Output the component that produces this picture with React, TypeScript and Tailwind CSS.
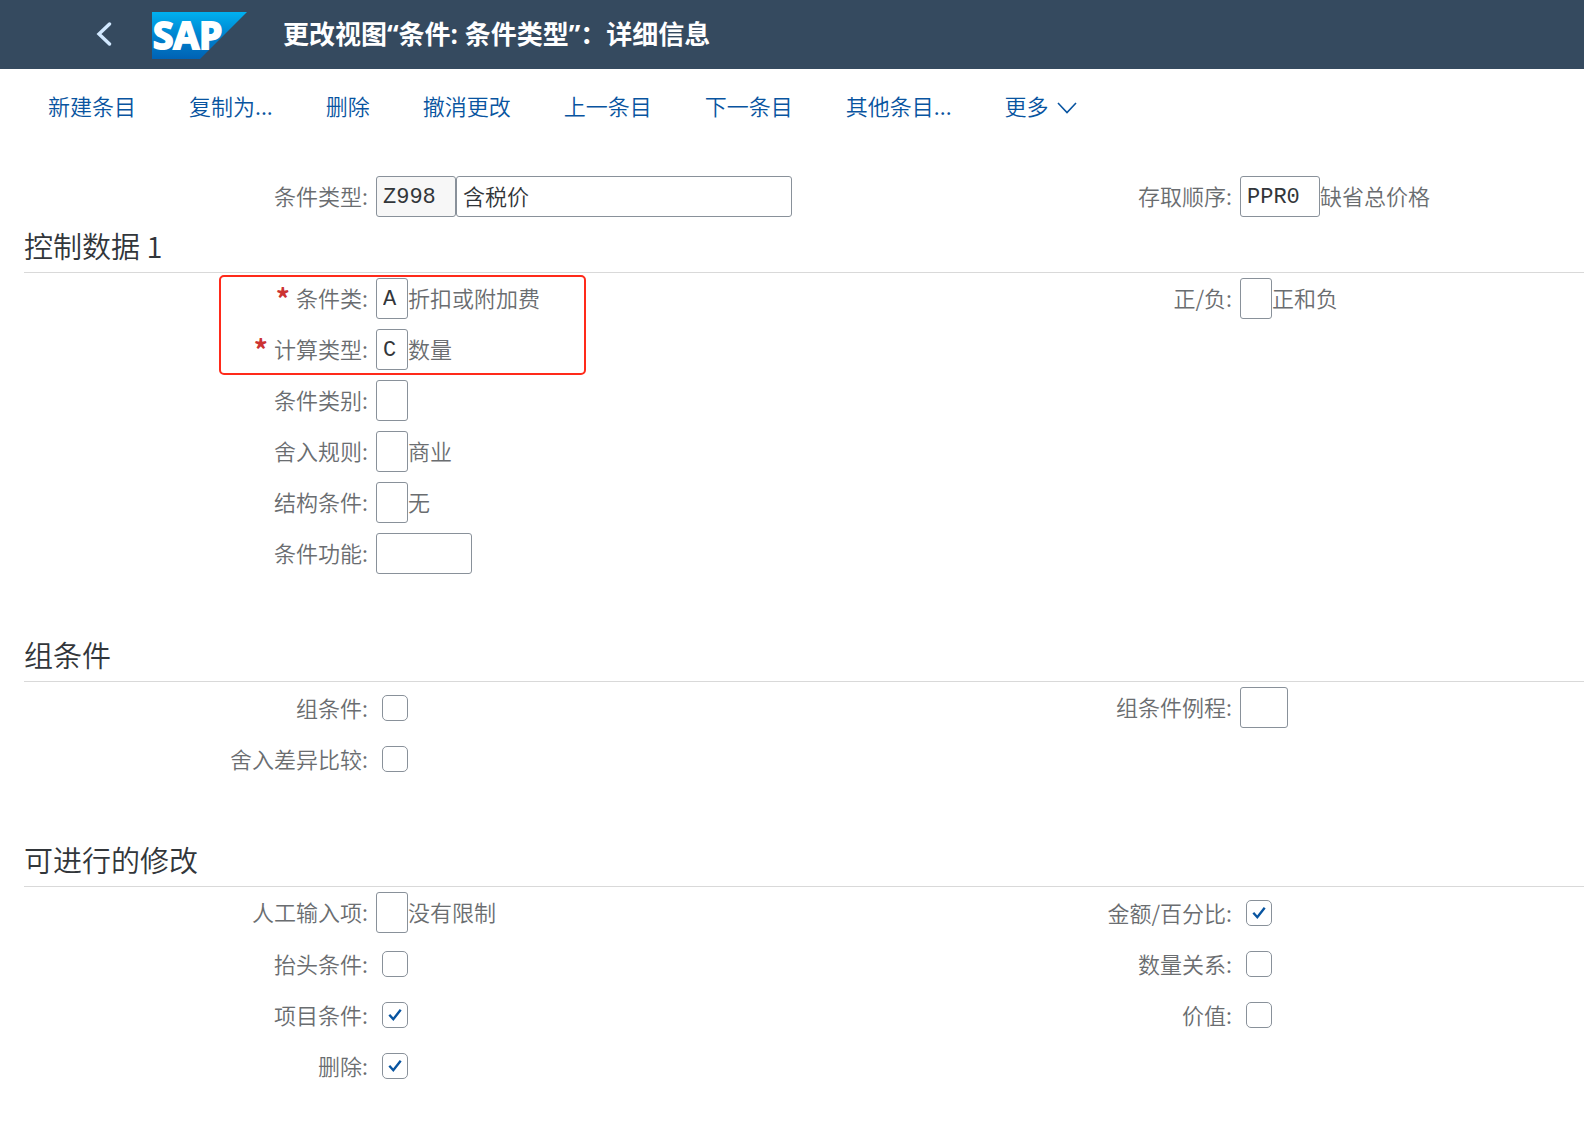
import { useState, type ReactNode } from 'react';

function BackIcon() {
  return (
    <svg className="h-6 w-4" viewBox="0 0 16 24" fill="none" stroke="#d1e8ff" strokeWidth="3.4" strokeLinecap="round">
      <path d="M13.5 2 L3 12 L13.5 22" />
    </svg>
  );
}

function SapLogo() {
  return (
    <svg className="h-[47px] w-[95px] shrink-0 overflow-visible" viewBox="0 0 95 47" role="img" aria-label="SAP">
      <defs>
        <linearGradient id="sap-blue" x1="0" y1="0" x2="0" y2="1">
          <stop offset="0" stopColor="#00b1f0" />
          <stop offset="0.5" stopColor="#0083cf" />
          <stop offset="1" stopColor="#0062b4" />
        </linearGradient>
      </defs>
      <path d="M0 0 H95 L48 47 H0 Z" fill="url(#sap-blue)" />
      <text
        x="1"
        y="37"
        fill="#fff"
        stroke="#fff"
        strokeWidth="2"
        fontFamily="'Open Sans', sans-serif"
        fontWeight="700"
        fontSize="37"
      >
        SAP
      </text>
    </svg>
  );
}

function ToolbarButton({ children }: { children: ReactNode }) {
  return (
    <button type="button" className="flex items-center whitespace-nowrap text-[22px] leading-8 text-[#0854a0]">
      {children}
    </button>
  );
}

type LabelProps = { id: string; text: string; required?: boolean; raised?: boolean };

function Label({ id, text, required, raised }: LabelProps) {
  return (
    <label
      htmlFor={id}
      className={`flex h-[41px] items-center justify-end whitespace-nowrap pr-2 text-[#6a6d70] ${raised ? 'pb-0.5' : ''}`}
    >
      {required && <span className="mr-1.5 text-[28px] font-bold leading-8 text-[#cc3333]">*</span>}
      {text}:
    </label>
  );
}

type FieldProps = {
  id: string;
  text: string;
  width: string;
  required?: boolean;
  value?: string;
  note?: string;
  readOnly?: boolean;
  right?: boolean;
  children?: ReactNode;
};

function Field({ id, text, required, width, value = '', note, readOnly, right, children }: FieldProps) {
  return (
    <>
      <div className={right ? 'col-start-3' : 'col-start-1'}>
        <Label id={id} text={text} required={required} raised />
      </div>
      <div className="flex h-[41px] items-center whitespace-nowrap text-[#6a6d70]">
        <input
          id={id}
          defaultValue={value}
          readOnly={readOnly}
          className={`h-[41px] shrink-0 rounded-[3px] border border-[#89919a] px-1.5 pt-0.5 font-['Liberation_Mono','Noto_Sans_CJK_SC',monospace] text-[22px] text-[#32363a] outline-none ${width} ${readOnly ? 'bg-[#f7f7f7]' : 'bg-white'}`}
        />
        {children}
        {note && <span className="pb-0.5">{note}</span>}
      </div>
    </>
  );
}

type CheckFieldProps = { id: string; text: string; checked?: boolean; right?: boolean };

function CheckField({ id, text, checked = false, right }: CheckFieldProps) {
  const [on, setOn] = useState(checked);
  return (
    <>
      <div className={right ? 'col-start-3' : 'col-start-1'}>
        <Label id={id} text={text} />
      </div>
      <div className="flex h-[41px] items-center pl-1.5">
        <span className="grid">
          <input
            id={id}
            type="checkbox"
            checked={on}
            onChange={() => setOn(!on)}
            className="col-start-1 row-start-1 size-[26px] appearance-none rounded-[5px] border border-[#89919a] bg-white"
          />
          {on && (
            <svg
              className="pointer-events-none col-start-1 row-start-1 size-[26px]"
              viewBox="0 0 26 26"
              fill="none"
              stroke="#0854a0"
              strokeWidth="2.4"
            >
              <path d="M7.3 12.8 L11.3 17.2 L18.7 7.8" />
            </svg>
          )}
        </span>
      </div>
    </>
  );
}

function Rows({ children }: { children: ReactNode }) {
  return <div className="grid grid-cols-[44fr_64fr_44fr_43fr] gap-y-2.5">{children}</div>;
}

function Section({ title, children }: { title: string; children: ReactNode }) {
  return (
    <section>
      <h2 className="flex h-[52px] items-center border-b border-[#d9d9d9] pb-1 text-[29px] font-[350] leading-10 text-[#32363a]">
        {title}
      </h2>
      <div className="relative pt-[5px]">{children}</div>
    </section>
  );
}

export default function App() {
  return (
    <div className="min-h-screen bg-white font-['Noto_Sans_CJK_SC',sans-serif] text-[22px] font-[350]">
      <header className="flex h-[69px] items-center bg-[#354a5f] pl-24 pt-0.5">
        <button type="button" aria-label="返回" className="mr-10 pb-1">
          <BackIcon />
        </button>
        <SapLogo />
        <h1 className="ml-9 whitespace-nowrap pb-1 font-['Open_Sans','Noto_Sans_CJK_SC',sans-serif] text-[26px] font-bold leading-10 text-white">
          更改视图“条件: 条件类型”：详细信息
        </h1>
      </header>

      <nav className="flex h-[75px] items-center gap-[53px] pb-1 pl-12">
        <ToolbarButton>新建条目</ToolbarButton>
        <ToolbarButton>复制为...</ToolbarButton>
        <ToolbarButton>删除</ToolbarButton>
        <ToolbarButton>撤消更改</ToolbarButton>
        <ToolbarButton>上一条目</ToolbarButton>
        <ToolbarButton>下一条目</ToolbarButton>
        <ToolbarButton>其他条目...</ToolbarButton>
        <ToolbarButton>
          更多
          <svg className="ml-2 mt-1.5 h-3 w-5" viewBox="0 0 20 12" fill="none" stroke="#0854a0" strokeWidth="1.6">
            <path d="M1 1 L10 10.5 L19 1" />
          </svg>
        </ToolbarButton>
      </nav>

      <main className="flex flex-col gap-14 overflow-hidden pb-8 pl-6 pt-8">
        <div className="flex flex-col gap-1">
          <Rows>
            <Field id="type" text="条件类型" width="w-20" value="Z998" readOnly>
              <input
                aria-label="条件类型名称"
                defaultValue="含税价"
                className="h-[41px] w-[336px] rounded-[3px] border border-[#89919a] bg-white px-1.5 pb-1 text-[22px] text-[#32363a] outline-none"
              />
            </Field>
            <Field id="access" text="存取顺序" width="w-20" value="PPR0" note="缺省总价格" right />
          </Rows>
          <Section title="控制数据 1">
            <Rows>
              <Field id="class" text="条件类" width="w-8" value="A" note="折扣或附加费" required />
              <Field id="sign" text="正/负" width="w-8" note="正和负" right />
              <Field id="calc" text="计算类型" width="w-8" value="C" note="数量" required />
              <Field id="category" text="条件类别" width="w-8" />
              <Field id="rounding" text="舍入规则" width="w-8" note="商业" />
              <Field id="structure" text="结构条件" width="w-8" note="无" />
              <Field id="function" text="条件功能" width="w-24" />
            </Rows>
            <div className="pointer-events-none absolute left-[195px] top-0.5 h-[100px] w-[367px] rounded-[5px] border-2 border-[#ff2a1a]" />
          </Section>
        </div>

        <Section title="组条件">
          <Rows>
            <CheckField id="group" text="组条件" />
            <Field id="routine" text="组条件例程" width="w-12" right />
            <CheckField id="diff" text="舍入差异比较" />
          </Rows>
        </Section>

        <Section title="可进行的修改">
          <Rows>
            <Field id="manual" text="人工输入项" width="w-8" note="没有限制" />
            <CheckField id="amount" text="金额/百分比" checked right />
            <CheckField id="head" text="抬头条件" />
            <CheckField id="quantity" text="数量关系" right />
            <CheckField id="item" text="项目条件" checked />
            <CheckField id="value" text="价值" right />
            <CheckField id="delete" text="删除" checked />
          </Rows>
        </Section>
      </main>
    </div>
  );
}
